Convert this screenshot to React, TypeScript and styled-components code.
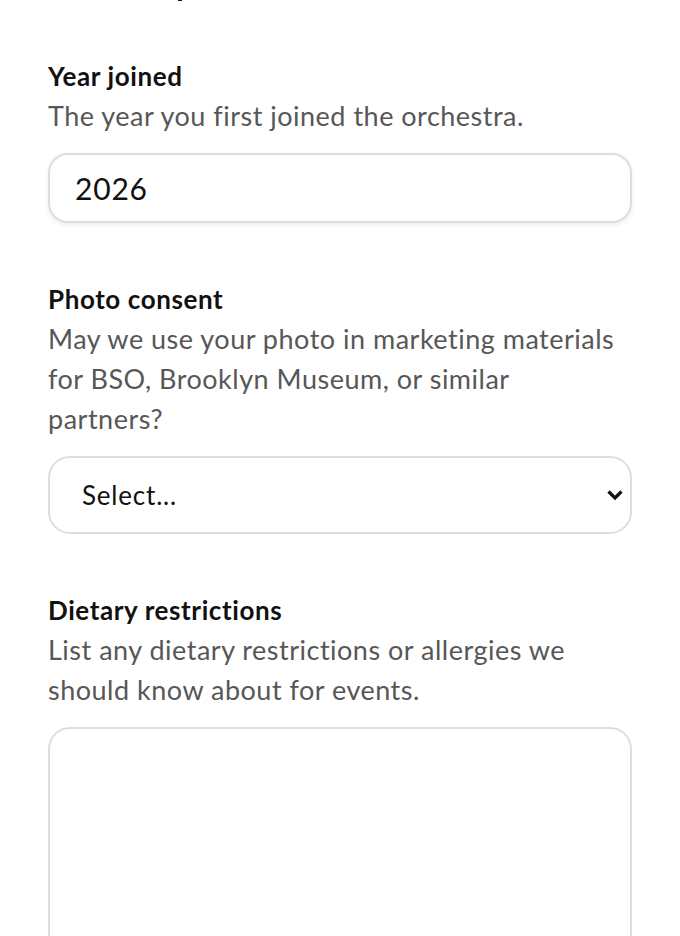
import React from 'react';
import styled, { createGlobalStyle } from 'styled-components';

const GlobalStyle = createGlobalStyle`
  html, body {
    margin: 0;
    padding: 0;
    background: #ffffff;
  }
  body {
    font-family: 'Lato', 'Noto Sans', sans-serif;
    color: #111111;
  }
`;

const Page = styled.div`
  padding: 0 48px;
  overflow: hidden;
`;

const SectionTitle = styled.h2`
  margin: -36px 0 0 0;
  font-size: 32px;
  line-height: 40px;
  font-weight: 700;
  color: #111111;
`;

const Form = styled.form`
  display: flex;
  flex-direction: column;
  gap: 60px;
  padding-top: 56px;
`;

const Field = styled.div`
  display: flex;
  flex-direction: column;
`;

const Label = styled.label`
  font-size: 26px;
  line-height: 32px;
  font-weight: 700;
  letter-spacing: 0.6px;
  color: #111111;
`;

const Hint = styled.p`
  max-width: 570px;
  margin: 4px 0 17px 0;
  font-size: 27px;
  line-height: 40px;
  letter-spacing: 0.5px;
  color: #575757;
`;

const TextInput = styled.input`
  box-sizing: border-box;
  width: 100%;
  height: 70px;
  padding: 0 25px;
  border: 2px solid #dedede;
  border-radius: 20px;
  box-shadow: 0 2px 5px rgba(0, 0, 0, 0.08);
  font-family: inherit;
  font-size: 30px;
  letter-spacing: 0.8px;
  color: #111111;
  background: #ffffff;
  outline: none;
`;

const SelectWrap = styled.div`
  position: relative;
`;

const Select = styled.select`
  box-sizing: border-box;
  width: 100%;
  height: 78px;
  padding: 0 40px 0 32px;
  border: 2px solid #dedede;
  border-radius: 22px;
  font-family: inherit;
  font-size: 26px;
  letter-spacing: 0.8px;
  color: #111111;
  background: #ffffff;
  appearance: none;
  outline: none;
`;

const Chevron = styled.svg`
  position: absolute;
  right: 8px;
  top: 50%;
  transform: translateY(-50%);
  pointer-events: none;
`;

const TextArea = styled.textarea`
  box-sizing: border-box;
  width: 100%;
  height: 260px;
  padding: 20px 26px;
  border: 2px solid #dedede;
  border-radius: 22px;
  font-family: inherit;
  font-size: 24px;
  resize: none;
  outline: none;
  background: #ffffff;
`;

export default function App() {
  return (
    <>
      <GlobalStyle />
      <Page>
        <SectionTitle>Member profile</SectionTitle>
        <Form>
          <Field>
            <Label htmlFor="year">Year joined</Label>
            <Hint>The year you first joined the orchestra.</Hint>
            <TextInput id="year" type="text" defaultValue="2026" />
          </Field>
          <Field>
            <Label htmlFor="photo">Photo consent</Label>
            <Hint>
              May we use your photo in marketing materials for BSO, Brooklyn Museum, or similar
              partners?
            </Hint>
            <SelectWrap>
              <Select id="photo" defaultValue="">
                <option value="">Select...</option>
                <option value="yes">Yes</option>
                <option value="no">No</option>
              </Select>
              <Chevron width="18" height="12" viewBox="0 0 18 12">
                <path d="M2.5 2.5 L9 9 L15.5 2.5" fill="none" stroke="#111" strokeWidth="3.2" />
              </Chevron>
            </SelectWrap>
          </Field>
          <Field>
            <Label htmlFor="diet">Dietary restrictions</Label>
            <Hint>List any dietary restrictions or allergies we should know about for events.</Hint>
            <TextArea id="diet" />
          </Field>
        </Form>
      </Page>
    </>
  );
}
